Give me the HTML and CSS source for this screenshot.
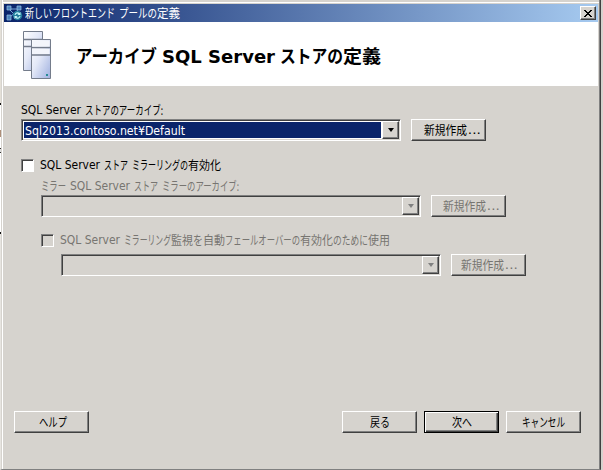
FILE: index.html
```html
<!DOCTYPE html>
<html lang="ja">
<head>
<meta charset="utf-8">
<title>新しいフロントエンド プールの定義</title>
<link rel="stylesheet" href="styles.css">
</head>
<body>
<main class="window">
  <header class="titlebar">
    <svg class="app-icon" width="17" height="16" viewBox="0 0 17 16">
      <path d="M4 4h8M4 5l8 8M13 4L3 13" stroke="#76a6d8" fill="none"/>
      <path d="M1 1h4v4H1zM11 1h4v4h-4zM1 10h4v5H1z" fill="#4c83bb" stroke="#99c1e6" stroke-width=".7"/>
      <circle cx="11.5" cy="10.5" r="4.7" fill="#247f9d"/>
      <path d="M8.5 10a3 3 0 0 1 5-2l1-1v3h-3l1-1a2 2 0 0 0-3 1M14.5 11a3 3 0 0 1-5 2l-1 1v-3h3l-1 1a2 2 0 0 0 3-1" fill="#c4f5fa"/>
    </svg>
    <span class="line title-text"><span class="fit ja" data-width="27">新しい</span><span class="fit ja" data-width="63">フロントエンド</span><span class="gap"></span><span class="fit ja" data-width="38">プールの</span><span class="fit ja" data-width="23">定義</span></span>
    <button class="close" aria-label="閉じる"><svg width="8" height="7" viewBox="0 0 8 7" shape-rendering="crispEdges"><path d="M0 0h2v1h1v1h2V1h1V0h2v1H7v1H6v1H5v1h1v1h1v1h1v1H6V6H5V5H3v1H2v1H0V6h1V5h1V4h1V3H2V2H1V1H0z"/></svg></button>
  </header>
  <section class="banner">
    <svg class="servers" width="30" height="50" viewBox="0 0 30 50">
      <defs><linearGradient id="metal" x2="1" y2="1"><stop stop-color="#fff"/><stop offset=".45" stop-color="#e3e8f7"/><stop offset="1" stop-color="#9fb0df"/></linearGradient></defs>
      <g fill="url(#metal)" stroke="#747c8b"><path d="M1.5 1.5h19v39h-19z"/><path d="M1.5 9.5h19M1.5 16.5h19" stroke-width="1.5"/><path d="M9.500 9.500h19v39h-19z"/><path d="M9.500 17.500h19M9.500 25h19" stroke-width="1.5"/></g>
      <path d="M10.500 10.500h17v6h-17zM10.500 19h17v5h-17z" fill="#f3f5fb"/><path d="M24 44h2v2h-2z" fill="#278b95"/>
    </svg>
    <h1 class="line heading"><span class="fit" data-width="81">アーカイブ</span><span class="gap"></span><span class="fit" data-width="113">SQL Server</span><span class="gap"></span><span class="fit" data-width="63">ストアの</span><span class="fit" data-width="38">定義</span></h1>
  </section>
  <section class="form">
    <div class="line label"><span class="fit" data-width="60">SQL Server</span><span class="gap"></span><span class="fit ja" data-width="78">ストアのアーカイブ:</span></div>
    <div class="field">
      <div class="select"><span class="value"><span class="fit" data-width="160">Sql2013.contoso.net¥Default</span></span><span class="drop"><i class="arrow"></i></span></div>
      <button class="button create"><span class="fit ja" data-width="43">新規作成</span><span class="fit" data-width="13">...</span></button>
    </div>
    <label class="check main-check"><i class="box"></i><span class="line"><span class="fit" data-width="60">SQL Server</span><span class="gap"></span><span class="fit ja" data-width="24">ストア</span><span class="gap"></span><span class="fit ja" data-width="56">ミラーリングの</span><span class="fit ja" data-width="33">有効化</span></span></label>
    <div class="mirror disabled">
      <div class="line label"><span class="fit ja" data-width="25">ミラー</span><span class="gap"></span><span class="fit" data-width="60">SQL Server</span><span class="gap"></span><span class="fit ja" data-width="24">ストア</span><span class="gap"></span><span class="fit ja" data-width="77">ミラーのアーカイブ:</span></div>
      <div class="field"><div class="select"><span class="value"></span><span class="drop"><i class="arrow"></i></span></div><button class="button create mirror-create" disabled><span class="fit ja" data-width="43">新規作成</span><span class="fit" data-width="13">...</span></button></div>
      <label class="check"><i class="box"></i><span class="line"><span class="fit" data-width="60">SQL Server</span><span class="gap"></span><span class="fit ja" data-width="47">ミラーリング</span><span class="fit ja" data-width="22">監視</span><span class="fit ja" data-width="10">を</span><span class="fit ja" data-width="22">自動</span><span class="fit ja" data-width="75">フェールオーバーの</span><span class="fit ja" data-width="33">有効化</span><span class="fit ja" data-width="35">のために</span><span class="fit ja" data-width="22">使用</span></span></label>
      <div class="field witness"><div class="select"><span class="value"></span><span class="drop"><i class="arrow"></i></span></div><button class="button create witness-create" disabled><span class="fit ja" data-width="43">新規作成</span><span class="fit" data-width="13">...</span></button></div>
    </div>
  </section>
  <footer class="actions">
    <button class="button help"><span class="fit ja" data-width="28">ヘルプ</span></button>
    <button class="button back"><span class="fit ja" data-width="20">戻る</span></button>
    <button class="button next"><span class="fit ja" data-width="20">次へ</span></button>
    <button class="button"><span class="fit ja" data-width="43">キャンセル</span></button>
  </footer>
</main>
<script src="fit.js"></script>
</body>
</html>
```
FILE: styles.css
```css
* { box-sizing: border-box; }
html, body { height: 100%; }
body {
  margin: 0; overflow: hidden; color: #000; font: 12px/16px "DejaVu Sans", "Noto Sans CJK JP", sans-serif;
  background: linear-gradient(#e4e0d8 0 103px, #111 103px 105px, #fff 105px 130px, #ad8e78 130px 137px, #fff 137px 148px, #333 148px 149px, #ddd 149px 152px, #333 152px 153px, #fff 153px 232px, #111 232px 234px, #e7e5e1 234px) 0 0 / 1px 100% no-repeat #d6d3ce;
}
button { font: inherit; color: inherit; padding: 0; }
svg { display: block; }
.window { display: flex; flex-direction: column; width: 601px; height: 470px; padding: 4px 2px 0 2px; border: 0 solid; border-left: 2px solid transparent; border-right: 1px solid #404040; border-bottom: 1px solid #808080; background: #d6d3ce; background-clip: padding-box; box-shadow: inset 1px 0 #fff, inset -1px 0 #808080, inset 0 2px #d6d3ce, inset 0 3px #fff; }
.titlebar { display: flex; flex: none; align-items: center; height: 18px; padding: 0 2px 0 2px; color: #fff; background: linear-gradient(90deg, #0a246a, #a6caf0); }
.app-icon { flex: none; margin-right: 2px; }
.line { display: flex; white-space: nowrap; }
.fit { display: block; flex: none; white-space: nowrap; transform-origin: left center; }
.ja { font-size: 12.5px; font-family: "Noto Sans CJK JP", sans-serif; }
.gap { flex: none; width: 4px; }
.close { display: grid; place-items: center; width: 16px; height: 14px; margin-left: auto; border: 1px solid; border-color: #fff #404040 #404040 #fff; background: #d6d3ce; box-shadow: inset -1px -1px #808080; color: #000; }
.banner { display: flex; flex: none; align-items: flex-start; height: 64px; padding: 8px 0 0 18px; background: #fff; }
.heading { margin: 15px 0 0 24px; font-size: 18px; line-height: 24px; font-weight: 700; }
.heading .gap { width: 5px; }
.form { display: flex; flex-direction: column; padding: 16px 0 0 17px; }
.label { height: 17px; }
.field { display: flex; gap: 10px; }
.select { display: flex; width: 380px; height: 22px; padding: 1px; border: 1px solid; border-color: #808080 #fff #fff #808080; box-shadow: inset 1px 1px #404040; }
.value { flex: 1; height: 18px; padding: 0 0 0 1px; border: 1px solid #fff; background: #0a246a; color: #fff; line-height: 18px; }
.drop { display: grid; place-items: center; width: 17px; height: 18px; border: 1px solid; border-color: #fff #404040 #404040 #fff; background: #d6d3ce; box-shadow: inset -1px -1px #808080; }
.arrow { border: solid transparent; border-width: 4px 3.5px 0; border-top-color: #000; }
.button { display: flex; align-items: center; justify-content: center; flex: none; width: 75px; height: 22px; border: 1px solid; border-color: #fff #404040 #404040 #fff; background: #d6d3ce; box-shadow: inset -1px -1px #808080; line-height: 18px; }
.create { padding-left: 7px; }
.mirror-create { padding-left: 4px; }
.witness-create { padding-left: 1px; }
.help { padding-left: 2px; }
.check { display: flex; align-items: center; gap: 6px; height: 16px; }
.main-check { margin-top: 16px; }
.box { width: 13px; height: 13px; background: #fff; border: 1px solid; border-color: #808080 #fff #fff #808080; box-shadow: inset 1px 1px #404040; }
.mirror { padding: 5px 0 0 20px; }
.disabled { color: #777571; }
.disabled .value { background: #d6d3ce; border-color: #d6d3ce; }
.disabled .box { background: #d6d3ce; }
.disabled .arrow { border-top-color: #808080; }
.disabled .check { margin-top: 15px; }
.witness { padding: 6px 0 0 20px; }
.actions { display: flex; flex: none; margin-top: auto; padding: 0 17px 36px 10px; gap: 7px; }
.back { margin-left: auto; }
.next { border-color: #000; box-shadow: inset 1px 1px #fff, inset -1px -1px #404040, inset -2px -2px #808080; }
```
FILE: fit.js
```js
// Condense each run of glyphs to its measured column width.
document.querySelectorAll('.fit').forEach((run) => {
  const target = Number(run.dataset.width);
  run.style.width = 'max-content';
  const natural = run.getBoundingClientRect().width;
  run.style.width = target + 'px';
  run.style.transform = 'scaleX(' + target / natural + ')';
});
```
